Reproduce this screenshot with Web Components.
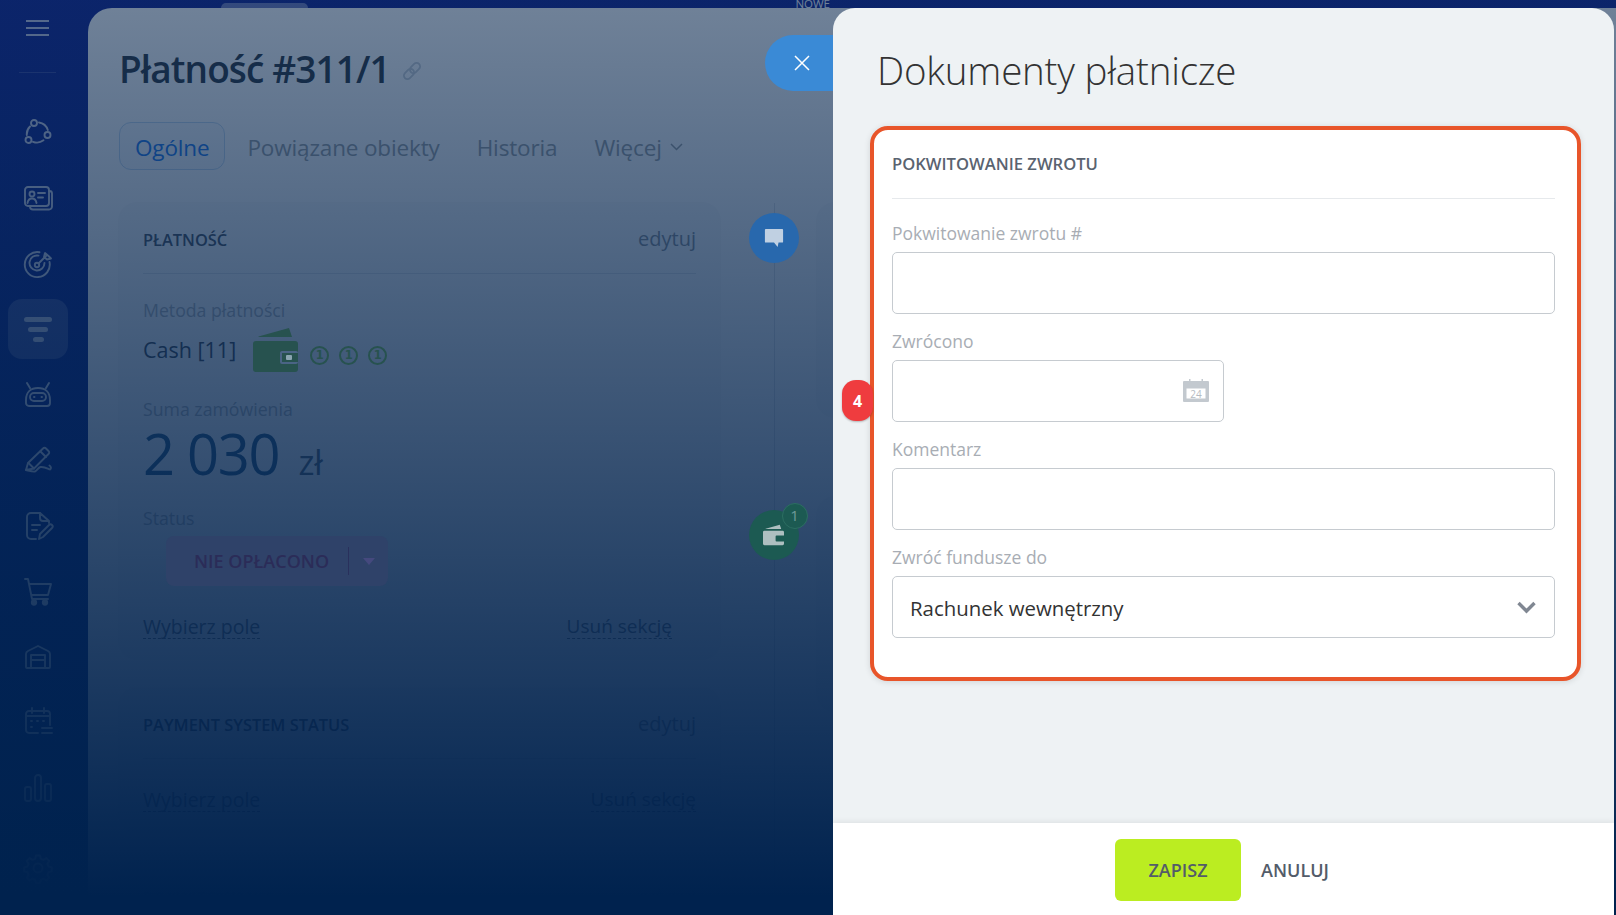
<!DOCTYPE html>
<html lang="pl">
<head>
<meta charset="utf-8">
<title>Dokumenty płatnicze</title>
<style>
  html, body { margin: 0; height: 915px; overflow: hidden; background: #012050; }
  body { font-family: "Open Sans", "Liberation Sans", sans-serif; }
</style>
</head>
<body>
<crm-app>
  <crm-sidebar slot="nav"></crm-sidebar>
  <payment-page slot="page"></payment-page>
  <document-slider slot="slider" heading="Dokumenty płatnicze">
    <form-card heading="POKWITOWANIE ZWROTU" step="4">
      <form-field label="Pokwitowanie zwrotu #"></form-field>
      <form-field label="Zwrócono" type="date"></form-field>
      <form-field label="Komentarz"></form-field>
      <form-field label="Zwróć fundusze do" type="select" value="Rachunek wewnętrzny"></form-field>
    </form-card>
  </document-slider>
</crm-app>

<script>
const NAV_ICONS = {
  sites: '<circle cx="10" cy="4" r="3"/><circle cx="4.500" cy="21" r="3"/><circle cx="23.500" cy="16" r="3"/><path d="M6 7.500A11 11 0 0 0 2.800 16M9 22.800a11 11 0 0 0 10.500-1.500M23.800 11A11 11 0 0 0 15 3.500"/>',
  contacts: '<rect x="1" y="3" width="24" height="19" rx="3"/><path d="M25 7h.5A2.500 2.500 0 0 1 28 9.500v13a3 3 0 0 1-3 3H9a3 3 0 0 1-3-3V22"/><circle cx="8" cy="10" r="2.500"/><path d="M3.500 19c.5-3 2.500-4.500 4.500-4.500s4 1.500 4.500 4.500M14 9h7M14 13.500h5"/>',
  target: '<path d="M25.500 12A12.500 12.500 0 1 1 15.500 2.300"/><path d="M20.500 13a7.500 7.500 0 1 1-6-7.400"/><circle cx="13" cy="15" r="2.200"/><path d="M14.500 13.500 22 6M21 3l-1 4 3 2.500 4-1-2.500-2.500z"/>',
  robot: '<path d="M3 2l3 5M25 2l-3 5M2 19c0-8 5-12 12-12s12 4 12 12v3a3 3 0 0 1-3 3H5a3 3 0 0 1-3-3z"/><rect x="6" y="12" width="16" height="8" rx="4"/><path d="M10 16h.5M17.500 16h.5"/>',
  pencil: '<path d="M2 24l2-7L19 2.500a2 2 0 0 1 3 0l2.500 2.500a2 2 0 0 1 0 3L10 22.500z"/><path d="M16.500 5.500l5.500 5.500M4.500 17l5.500 5.500M2 24c4 1 7 2 9 1.500 2-.5 3-4 5.500-4.500 3.500-.5 6 1 9.500 2.500 1.500-1 1-3-.5-4"/>',
  invoice: '<path d="M16 1H7a4 4 0 0 0-4 4v18a4 4 0 0 0 4 4h5"/><path d="M16 1l9 8v2M16 1v5a3 3 0 0 0 3 3h6M8 13h8M8 18h5"/><path d="M15 27l1-5 9-9a2 2 0 0 1 3 3l-9 9z"/>',
  cart: '<path d="M1 2h3l4 20h16M5 7h22l-3 11H7.500" /><circle cx="10" cy="25.500" r="2.200" fill="#fff"/><circle cx="21" cy="25.500" r="2.200" fill="#fff"/>',
  store: '<path d="M2 11c0-1.500 1-2.500 2-3l10-5 10 5c1 .5 2 1.500 2 3v13a1 1 0 0 1-1 1H3a1 1 0 0 1-1-1z"/><path d="M7 25V12h14v13M7 17h14"/>',
  calendar: '<path d="M14 25H5a3 3 0 0 1-3-3V6a3 3 0 0 1 3-3h18a3 3 0 0 1 3 3v11M8 0v5M20 0v5M2 8h24"/><path d="M7 13h1M13 13h1M19 13h1M7 19h1M18 20h10M18 25h10"/>',
  chart: '<rect x="1" y="13" width="6" height="14" rx="2"/><rect x="11" y="1" width="6" height="26" rx="3"/><rect x="21" y="10" width="6" height="17" rx="2"/>',
  gear: '<circle cx="14" cy="14" r="4.500"/><path d="M12 1.500h4l.8 3.300 2.700 1.100 2.900-1.800 2.800 2.800-1.800 2.900 1.100 2.700 3.300.8v4l-3.300.8-1.100 2.700 1.800 2.900-2.800 2.800-2.900-1.800-2.700 1.100-.8 3.300h-4l-.8-3.300-2.700-1.100-2.900 1.800-2.800-2.800 1.800-2.900-1.100-2.700-3.300-.8v-4l3.300-.8 1.100-2.700-1.800-2.900 2.800-2.800 2.900 1.800 2.700-1.100z"/>'
};

class CrmApp extends HTMLElement {
  constructor() {
    super();
    const shadowRoot = this.attachShadow({mode: 'open'});
    shadowRoot.innerHTML = `
      <style>
        :host { display: block; position: relative; width: 1616px; height: 915px; overflow: hidden;
          background: linear-gradient(#1a2a96, #0a2c78); }
        .frame { display: flex; height: 100%; }
        .shade { position: absolute; inset: 0; z-index: 1;
          background: linear-gradient(rgba(0, 32, 72, .56), rgba(0, 34, 78, 1) 98%); }
      </style>
      <div class="frame">
        <slot name="nav"></slot>
        <slot name="page"></slot>
      </div>
      <div class="shade"></div>
      <slot name="slider"></slot>
    `;
  }
}

class CrmSidebar extends HTMLElement {
  constructor() {
    super();
    const shadowRoot = this.attachShadow({mode: 'open'});
    const items = ['sites', 'contacts', 'target', 'crm', 'robot', 'pencil', 'invoice', 'cart', 'store', 'calendar', 'chart'];
    shadowRoot.innerHTML = `
      <style>
        :host { display: block; flex: 0 0 88px; }
        .burger { display: flex; flex-direction: column; gap: 5px; width: 23px; margin: 20px 0 0 26px; }
        .burger i { display: block; height: 2px; background: #fff; opacity: .75; }
        .rule { height: 1px; margin: 36px 32px 0 19px; background: rgba(255,255,255,.18); }
        nav { display: flex; flex-direction: column; margin: 27px 0 0 8px; width: 60px; }
        .item { display: flex; align-items: center; justify-content: center; height: 65.5px; }
        .item.active { height: 60px; margin: 2.75px 0; border-radius: 14px; background: rgba(255,255,255,.2); }
        svg { width: 28px; height: 28px; fill: none; stroke: #fff; stroke-width: 1.9; stroke-linecap: round; stroke-linejoin: round; opacity: .8; overflow: visible; }
        .funnel { display: flex; flex-direction: column; align-items: center; gap: 5px; }
        .funnel i { display: block; height: 5px; border-radius: 3px; background: #fff; opacity: .65; }
        .gear { margin-top: 14.500px; }
        .gear svg { opacity: 1; }
      </style>
      <div class="burger"><i></i><i></i><i></i></div>
      <div class="rule"></div>
      <nav>
        ${items.map(name => name === 'crm'
          ? `<div class="item active"><div class="funnel"><i style="width:28px"></i><i style="width:20px"></i><i style="width:11px"></i></div></div>`
          : `<div class="item"><svg viewBox="0 0 28 28">${NAV_ICONS[name]}</svg></div>`).join('')}
        <div class="item gear"><svg viewBox="0 0 28 28">${NAV_ICONS.gear}</svg></div>
      </nav>
    `;
  }
}

class InfoCard extends HTMLElement {
  constructor() {
    super();
    const shadowRoot = this.attachShadow({mode: 'open'});
    shadowRoot.innerHTML = `
      <style>
        :host { display: block; padding: 0 24px; border-radius: 18px; background: #f9fafb; box-shadow: 0 0 0 1px rgba(0,0,0,.025); color: #4a535e; }
        header { display: flex; justify-content: space-between; align-items: center; height: 70px; border-bottom: 1px solid #dfe3e8; }
        h2 { margin: 0; padding-top: 3px; font-size: 16.400px; font-weight: 600; color: #535c69; }
        span { font-size: 20px; color: #8d949c; }
      </style>
      <header><h2>${this.getAttribute('heading')}</h2><span>edytuj</span></header>
      <slot></slot>
    `;
  }
}

class CardLinks extends HTMLElement {
  constructor() {
    super();
    const shadowRoot = this.attachShadow({mode: 'open'});
    shadowRoot.innerHTML = `
      <style>
        :host { display: flex; justify-content: space-between; align-items: center; height: 24px; font-size: 19.500px; color: #6f7782; }
        a { border-bottom: 1px dashed currentColor; line-height: 23px; }
        a + a { font-size: 19px; }
      </style>
      <a>Wybierz pole</a><a style="margin-right:${this.getAttribute('inset') || 0}px">Usuń sekcję</a>
    `;
  }
}

class PaymentPage extends HTMLElement {
  constructor() {
    super();
    const shadowRoot = this.attachShadow({mode: 'open'});
    const coin = `<span class="coin lit">1</span>`;
    shadowRoot.innerHTML = `
      <style>
        :host { display: block; flex: 1; min-width: 0; }
        .strip { display: flex; align-items: flex-start; height: 8px; overflow: hidden; padding: 0 786px 0 133px; justify-content: space-between; font-size: 11.500px; color: #fff; }
        .strip i { display: block; width: 87px; height: 5px; margin-top: 3px; border-radius: 5px 5px 0 0; background: rgba(255,255,255,.4); }
        .strip b { font-weight: 400; line-height: 8px; }
        .panel { height: 907px; overflow: hidden; padding: 0 0 0 31px; border-radius: 24px 0 0 0; background: #fff; box-sizing: border-box; }
        .title { display: flex; align-items: center; gap: 11px; height: 113px; padding-top: 7px; box-sizing: border-box; }
        h1 { margin: 0; font-size: 37px; font-weight: 600; color: #353e48; letter-spacing: -.9px; }
        .tabs { display: flex; align-items: center; height: 50px; font-size: 22.500px; color: #a0a5a8; letter-spacing: -.15px; }
        .tab { margin-right: 37px; display: flex; align-items: center; gap: 8px; padding-top: 2px; }
        .tab.on { height: 48px; box-sizing: border-box; padding: 2px 15px 0; margin-right: 22px; border: 1px solid #c6dcf2; border-radius: 12px; background: #f8fbff; color: #2b80ee; }
        .cols { display: flex; margin-top: 32px; }
        .left { flex: 0 0 601px; display: flex; flex-direction: column; gap: 29px; }
        .label { font-size: 17.700px; line-height: 24px; color: #b3b8be; }
        .cash { display: flex; align-items: center; height: 54px; font-size: 21.500px; color: #4b535e; }
        .cash .icons { display: flex; gap: 10px; align-items: center; margin-left: 12px; margin-top: 12px; }
        .coin { display: block; width: 19px; height: 19px; box-sizing: border-box; border: 2px solid #27524f; border-radius: 50%; color: #27524f; font: 700 11.500px/15px "DejaVu Sans", sans-serif; text-align: center; }
        .lit { position: relative; z-index: 2; }
        .sum { font-size: 56px; line-height: 64px; color: #37648c; letter-spacing: -1.3px; }
        .sum small { font-size: 34px; color: #60707f; margin-left: 6px; letter-spacing: 0; }
        .status { display: flex; align-items: center; width: 222px; height: 50px; margin: 6px 0 0 23px; border-radius: 8px; background: #2f4269; font-size: 18px; font-weight: 600; color: #2b2c58; }
        .status b { font-weight: 600; padding: 0 19px 0 28px; border-right: 1px solid #29305c; line-height: 28px; }
        .status i { width: 0; height: 0; margin-left: 14px; border: 6px solid transparent; border-top: 7px solid #45497e; border-bottom: 0; }
        .timeline { position: relative; flex: 0 0 97px; display: flex; flex-direction: column; align-items: center; }
        .timeline::before { content: ""; position: absolute; top: 0; bottom: 0; left: 54px; width: 1px; background: #dfe3e8; }
        .dot { display: flex; align-items: center; justify-content: center; width: 50px; height: 50px; margin: 10px 0 0 10px; border-radius: 50%; position: relative; z-index: 2; }
        .dot.blue { background: #2868ad; }
        .dot.green { background: #1c5a52; margin-top: 247px; }
        .count { position: absolute; top: -7px; right: -9px; width: 26px; height: 26px; box-sizing: border-box; border: 1px solid #2c6e62; border-radius: 50%; background: #1c5a52; color: #6f9a9a; font-size: 15px; line-height: 23px; text-align: center; }
        .side { flex: 1; display: flex; flex-direction: column; gap: 80px; }
        .side div { height: 214px; background: #f9fafb; box-shadow: 0 0 0 1px rgba(0,0,0,.025); border-radius: 18px 0 0 18px; }
      </style>
      <div class="strip"><i></i><b>NOWE</b></div>
      <div class="panel">
        <div class="title">
          <h1>Płatność #311/1</h1>
          <svg width="22" height="22" viewBox="0 0 22 22" fill="none" stroke="#cdd3da" stroke-width="1.800" style="margin-top:5px"><g transform="rotate(-45 11 11)"><rect x="1" y="7.500" width="11.500" height="7" rx="3.500"/><rect x="9.500" y="7.500" width="11.500" height="7" rx="3.500"/></g></svg>
        </div>
        <div class="tabs">
          <div class="tab on">Ogólne</div><div class="tab">Powiązane obiekty</div><div class="tab">Historia</div>
          <div class="tab">Więcej <svg width="13" height="8" viewBox="0 0 13 8" fill="none" stroke="#a0a5a8" stroke-width="1.500"><path d="M1 1l5.500 5.500L12 1"/></svg></div>
        </div>
        <div class="cols">
          <div class="left">
            <info-card heading="PŁATNOŚĆ" style="height:456px">
              <div class="label" style="margin-top:24px">Metoda płatności</div>
              <div class="cash">Cash [11]
                <svg class="lit" width="45" height="44" viewBox="0 0 45 44" style="margin-left:17px;margin-top:2px;flex:none">
                  <path d="M5.500 8.500 36 0l3 9H5.500z" fill="#27524f"/>
                  <path d="M3 13h39a3 3 0 0 1 3 3v25a3 3 0 0 1-3 3H3a3 3 0 0 1-3-3V16a3 3 0 0 1 3-3z" fill="#27524f"/>
                  <rect x="27" y="23" width="18" height="13" rx="2" fill="#4a6485"/><rect x="29" y="25" width="16" height="9" fill="#27524f"/><rect x="33" y="27" width="6" height="5" rx="1" fill="#8aa5b0"/>
                </svg>
                <span class="icons">${coin}${coin}${coin}</span>
              </div>
              <div class="label" style="margin-top:21px">Suma zamówienia</div>
              <div class="sum">2 030 <small>zł</small></div>
              <div class="label" style="margin-top:12px">Status</div>
              <div class="status lit"><b>NIE OPŁACONO</b><i></i></div>
              <card-links inset="24" style="margin-top:29px"></card-links>
            </info-card>
            <info-card heading="PAYMENT SYSTEM STATUS" style="height:144px">
              <card-links style="margin-top:29px"></card-links>
            </info-card>
            <info-card heading="POKWITOWANIA"></info-card>
          </div>
          <div class="timeline">
            <div class="dot blue"><svg width="20" height="20" viewBox="0 0 22 22"><path d="M2 1h18a1 1 0 0 1 1 1v13a1 1 0 0 1-1 1h-4l-1 5-4-5H2a1 1 0 0 1-1-1V2a1 1 0 0 1 1-1z" fill="#c0d0e2"/></svg></div>
            <div class="dot green">
              <svg width="21" height="22" viewBox="0 0 45 44"><path d="M5.500 8.500 36 0l3 9H5.500z" fill="#aebfc0"/><path d="M3 13h39a3 3 0 0 1 3 3v7H29a2 2 0 0 0-2 2v9a2 2 0 0 0 2 2h16v5a3 3 0 0 1-3 3H3a3 3 0 0 1-3-3V16a3 3 0 0 1 3-3z" fill="#aebfc0"/></svg>
              <span class="count">1</span>
            </div>
          </div>
          <div class="side"><div></div><div></div></div>
        </div>
      </div>
    `;
  }
}

class DocumentSlider extends HTMLElement {
  constructor() {
    super();
    const shadowRoot = this.attachShadow({mode: 'open'});
    shadowRoot.innerHTML = `
      <style>
        :host { position: absolute; z-index: 3; top: 8px; left: 833px; width: 781px; height: 907px; }
        .close { position: absolute; top: 27px; right: 100%; display: flex; align-items: center; justify-content: center; width: 68px; height: 56px; box-sizing: border-box; padding-left: 6px; border-radius: 28px 0 0 28px; background: #3a8ad6; }
        .sheet { display: flex; flex-direction: column; height: 100%; border-radius: 22px 22px 0 0; overflow: hidden; background: #eef2f4; }
        h1 { margin: 0; padding: 36px 44px 0; height: 82px; box-sizing: border-box; font-size: 38.500px; line-height: 52px; font-weight: 300; color: #333; letter-spacing: -.2px; }
        .body { flex: 1; padding: 36px 33px 0 37px; }
        footer { display: flex; justify-content: center; align-items: center; gap: 20px; height: 92px; box-sizing: border-box; padding: 2px 3px 0 0; background: #fff; box-shadow: 0 -1px 6px rgba(0,0,0,.08); }
        button { border: 0; padding: 0; font: 600 18px "Open Sans", sans-serif; color: #535c69; background: none; }
        .save { width: 126px; height: 62px; border-radius: 6px; background: #bbed21; }
      </style>
      <div class="close"><svg width="16" height="16" viewBox="0 0 16 16" fill="none" stroke="#fff" stroke-width="1.500"><path d="M1 1l14 14M15 1 1 15"/></svg></div>
      <div class="sheet">
        <h1>${this.getAttribute('heading')}</h1>
        <div class="body"><slot></slot></div>
        <footer><button class="save">ZAPISZ</button><button>ANULUJ</button></footer>
      </div>
    `;
  }
}

class FormCard extends HTMLElement {
  constructor() {
    super();
    const shadowRoot = this.attachShadow({mode: 'open'});
    shadowRoot.innerHTML = `
      <style>
        :host { display: block; position: relative; height: 555px; box-sizing: border-box; padding: 0 22px 0 18px; border: 4px solid #e8552a; border-radius: 18px; background: #fff; box-shadow: 0 1px 6px rgba(0,0,0,.12); }
        h2 { margin: 0; height: 69px; box-sizing: border-box; border-bottom: 1px solid #e6e9ec; padding-top: 22px; font-size: 16.600px; line-height: 24px; font-weight: 600; color: #5a6370; }
        .step { position: absolute; top: 250px; left: -32px; width: 31px; height: 41px; display: flex; align-items: center; justify-content: center; border-radius: 14px; background: #ef3c3f; font: 700 16px "Open Sans", sans-serif; color: #fff; box-shadow: 0 1px 2px rgba(0,0,0,.25); }
      </style>
      <h2>${this.getAttribute('heading')}</h2>
      <span class="step">${this.getAttribute('step')}</span>
      <slot></slot>
    `;
  }
}

class FormField extends HTMLElement {
  constructor() {
    super();
    const shadowRoot = this.attachShadow({mode: 'open'});
    const type = this.getAttribute('type');
    const trailing = {
      date: `<svg width="26" height="24" viewBox="0 0 26 24" style="margin-top:-3px"><path d="M1 3h5V1h1.500v2h11V1H20v2h5a1 1 0 0 1 1 1v19a1 1 0 0 1-1 1H1a1 1 0 0 1-1-1V4a1 1 0 0 1 1-1z" fill="#c3c9cf"/><rect x="3.500" y="10.500" width="19" height="10" fill="#fff"/><text x="13" y="19.500" text-anchor="middle" font-size="10" font-family="Open Sans, sans-serif" fill="#b5bbc2">24</text></svg>`,
      select: `<svg width="19" height="13" viewBox="0 0 19 13" fill="none" stroke="#808792" stroke-width="3.400"><path d="M1.500 2 9.500 10 17.500 2"/></svg>`
    }[type] || '';
    shadowRoot.innerHTML = `
      <style>
        :host { display: block; height: 108px; box-sizing: border-box; padding-top: 22px; }
        label { display: block; height: 31px; font-size: 17.500px; line-height: 24px; color: #a8adb4; }
        .box { display: flex; align-items: center; justify-content: space-between; height: 62px; box-sizing: border-box; padding: 0 18px 0 17px; border: 1px solid #c6cbd0; border-radius: 5px; background: #fff; font-size: 20.400px; color: #333; }
        .box span { padding-top: 2px; }
        :host([type="date"]) .box { width: 332px; padding-right: 14px; }
      </style>
      <label>${this.getAttribute('label')}</label>
      <div class="box"><span>${this.getAttribute('value') || ''}</span>${trailing}</div>
    `;
  }
}

customElements.define('info-card', InfoCard);
customElements.define('card-links', CardLinks);
customElements.define('crm-app', CrmApp);
customElements.define('crm-sidebar', CrmSidebar);
customElements.define('payment-page', PaymentPage);
customElements.define('form-field', FormField);
customElements.define('form-card', FormCard);
customElements.define('document-slider', DocumentSlider);
</script>
</body>
</html>
